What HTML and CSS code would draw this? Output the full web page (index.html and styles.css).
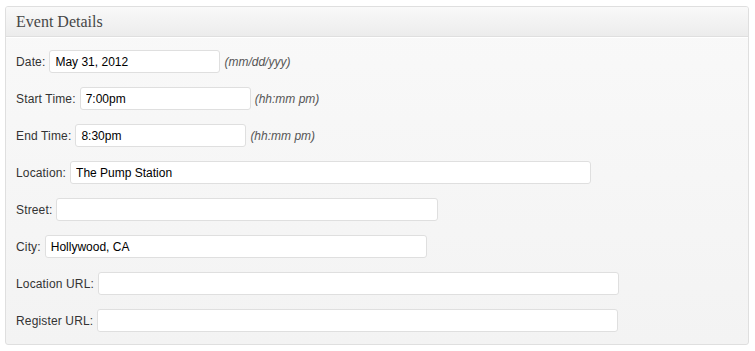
FILE: index.html
```html
<!DOCTYPE html>
<html>
<head>
<meta charset="utf-8">
<link rel="stylesheet" href="styles.css">
</head>
<body>
<div class="postbox">
  <h3 class="hndle">Event Details</h3>
  <div class="inside">
    <div class="row"><label>Date:</label><input class="short" value="May 31, 2012"><em class="hint">(mm/dd/yyy)</em></div>
    <div class="row"><label>Start Time:</label><input class="short" value="7:00pm"><em class="hint">(hh:mm pm)</em></div>
    <div class="row"><label>End Time:</label><input class="short" value="8:30pm"><em class="hint">(hh:mm pm)</em></div>
    <div class="row"><label>Location:</label><input class="long" value="The Pump Station"></div>
    <div class="row"><label>Street:</label><input class="mid" value=""></div>
    <div class="row"><label>City:</label><input class="mid" value="Hollywood, CA"></div>
    <div class="row"><label>Location URL:</label><input class="long" value=""></div>
    <div class="row"><label>Register URL:</label><input class="long" value=""></div>
  </div>
</div>
</body>
</html>
```

FILE: styles.css
```css
html, body {
  margin: 0;
  padding: 0;
  background: #ffffff;
}
body {
  padding: 6px 6px 0 5px;
  font-family: "Liberation Sans", Arial, sans-serif;
}
.postbox {
  border: 1px solid #dfdfdf;
  border-radius: 3px;
  background: linear-gradient(to bottom, #f9f9f9, #f3f3f3);
  overflow: hidden;
}
.hndle {
  margin: 0;
  height: 29px;
  line-height: 29px;
  padding: 0 10px;
  font-family: "Liberation Serif", Georgia, serif;
  font-weight: normal;
  font-size: 16px;
  color: #464646;
  background: linear-gradient(to bottom, #f9f9f9, #ececec);
  border-bottom: 1px solid #dfdfdf;
  box-shadow: 0 1px 0 #ffffff;
}
.inside {
  padding: 13px 10px 12px 10px;
  display: flex;
  flex-direction: column;
  gap: 14px;
}
.row {
  display: flex;
  align-items: center;
  height: 23px;
  font-size: 12px;
  color: #333333;
}
.row label {
  margin-right: 4px;
  letter-spacing: 0.15px;
}
.row input {
  box-sizing: border-box;
  height: 23px;
  border: 1px solid #dfdfdf;
  border-radius: 3px;
  background: #ffffff;
  padding: 0 5px;
  font-family: "Liberation Sans", Arial, sans-serif;
  font-size: 12px;
  color: #000000;
  outline: none;
}
.short { width: 171px; }
.mid { width: 382px; }
.long { width: 521px; }
.hint {
  margin-left: 4px;
  font-size: 12px;
  color: #555555;
}
```
